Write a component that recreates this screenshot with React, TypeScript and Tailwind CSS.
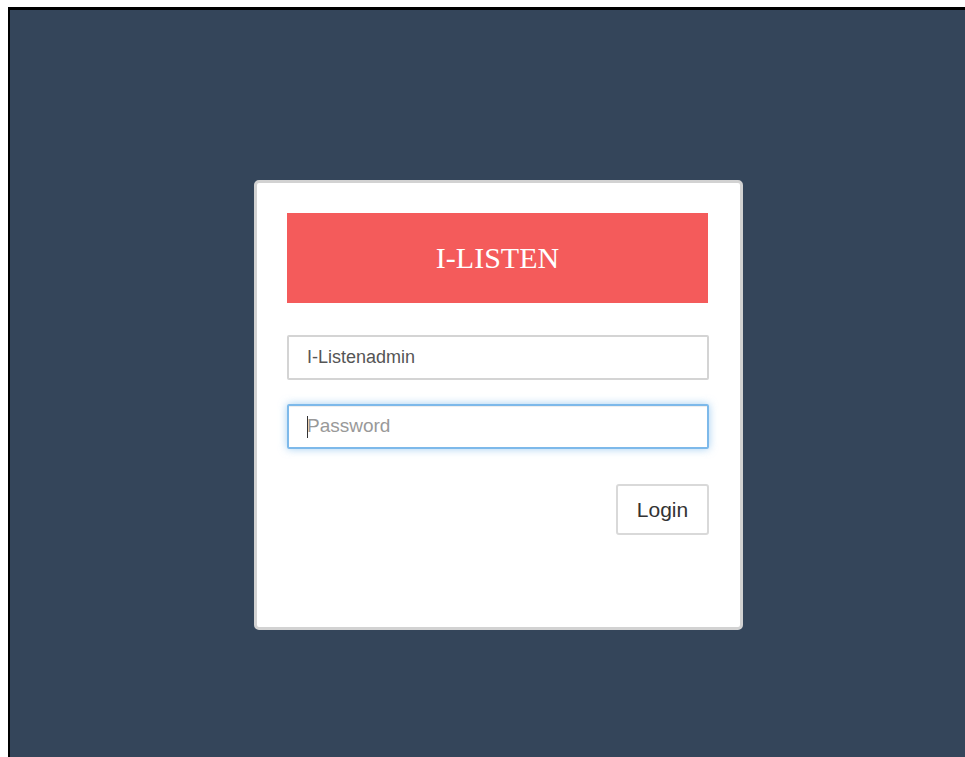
export default function App() {
  return (
    <div className="h-[757px] w-full overflow-hidden bg-white pl-[8px] pt-[7px]">
      <div className="h-full border-l-2 border-t-[3px] border-black bg-[#34455a] pl-[244px] pt-[170px]">
        <div className="flex h-[450px] w-[489px] flex-col rounded-[5px] border-[3px] border-[#d2d2d2] bg-white py-[30px] pl-[30px] pr-[31px]">
          <div className="mr-px flex h-[90px] items-center justify-center bg-[#f45b5b]">
            <h1 className="text-[30px] leading-none text-white [font-family:'Liberation_Serif',serif]">
              I-LISTEN
            </h1>
          </div>

          <div className="mt-[32px] flex h-[45px] items-center rounded-[2px] border-2 border-[#d4d4d4] px-[18px] text-[18px] text-[#555] [font-family:'Liberation_Sans',Arial,sans-serif]">
            I-Listenadmin
          </div>

          <div className="mt-[24px] flex h-[45px] items-center rounded-[2px] border-2 border-[#7db9ea] px-[18px] text-[19px] text-[#999] shadow-[inset_0_1px_1px_rgba(0,0,0,0.075),0_0_8px_rgba(102,175,233,0.6)] [font-family:'Liberation_Sans',Arial,sans-serif]">
            <span className="mr-[-1px] h-[22px] w-px bg-[#333]" />
            Password
          </div>

          <div className="mt-[35px] flex justify-end">
            <button className="h-[51px] w-[93px] rounded-[3px] border-2 border-[#d9d9d9] bg-white text-[21px] text-[#333] [font-family:'Liberation_Sans',Arial,sans-serif]">
              Login
            </button>
          </div>
        </div>
      </div>
    </div>
  )
}
